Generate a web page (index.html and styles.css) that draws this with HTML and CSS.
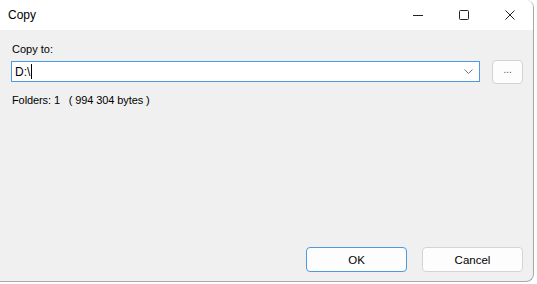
FILE: index.html
```html
<!DOCTYPE html>
<html lang="en">
<head>
  <meta charset="UTF-8" />
  <title>Copy</title>
  <link rel="stylesheet" href="styles.css">
</head>
<body>
  <div class="window">
    <div class="titlebar">
      <span class="title">Copy</span>
      <div class="caption">
        <span class="cap-btn">
          <svg width="10" height="10" viewBox="0 0 10 10"><path d="M0 5.5h10" stroke="#222" stroke-width="1"/></svg>
        </span>
        <span class="cap-btn">
          <svg width="10" height="10" viewBox="0 0 10 10"><rect x="0.5" y="0.5" width="9" height="9" rx="1" fill="none" stroke="#222" stroke-width="1"/></svg>
        </span>
        <span class="cap-btn">
          <svg width="10" height="10" viewBox="0 0 10 10"><path d="M0.5 0.5l9 9M9.5 0.5l-9 9" stroke="#222" stroke-width="1"/></svg>
        </span>
      </div>
    </div>

    <div class="content">
      <div class="label">Copy to:</div>
      <div class="path-row">
        <div class="combo">
          <span class="value">D:\<span class="caret"></span></span>
          <svg class="chevron" width="9" height="5" viewBox="0 0 9 5"><path d="M0.5 0.5l4 4 4-4" fill="none" stroke="#777" stroke-width="1"/></svg>
        </div>
        <button class="browse">...</button>
      </div>
      <div class="info">Folders: 1&nbsp;&nbsp; ( 994 304 bytes )</div>

      <div class="footer">
        <button class="btn default">OK</button>
        <button class="btn">Cancel</button>
      </div>
    </div>
  </div>
</body>
</html>
```

FILE: styles.css
```css
body {
  margin: 0;
  background-color: #fff;
  font-family: "Liberation Sans", Arial, sans-serif;
  font-size: 11px;
  color: #000;
}

.window {
  width: 533px;
  height: 281px;
  display: flex;
  flex-direction: column;
  background-color: #f0f0f0;
  border-right: 1px solid #a8a8a8;
  border-bottom: 1px solid #a8a8a8;
  border-radius: 0 8px 8px 0;
  overflow: hidden;
}

.titlebar {
  height: 30px;
  display: flex;
  align-items: center;
  justify-content: space-between;
  background-color: #fff;
}

.title {
  padding-left: 8px;
  font-size: 12px;
}

.caption {
  display: flex;
  height: 30px;
}

.cap-btn {
  width: 46px;
  display: flex;
  align-items: center;
  justify-content: center;
}

.content {
  flex: 1;
  display: flex;
  flex-direction: column;
  padding: 12px 10px 9px 12px;
}

.label {
  line-height: 15px;
}

.path-row {
  margin-top: 3px;
  margin-left: -1px;
  height: 23px;
  display: flex;
  align-items: center;
  gap: 14px;
}

.combo {
  width: 466px;
  height: 19px;
  display: flex;
  align-items: center;
  justify-content: space-between;
  background-color: #fff;
  border: 1px solid #4b9ae2;
  padding: 0 5px 0 3px;
  box-sizing: content-box;
  margin-right: -2px;
  font-size: 12px;
}

.value {
  display: flex;
  align-items: center;
}

.caret {
  width: 1px;
  height: 15px;
  margin-left: 1px;
  background-color: #000;
}

.chevron {
  margin-right: 1px;
}

.browse {
  width: 31px;
  height: 24px;
  padding: 0 0 4px;
  font-family: inherit;
  font-size: 10px;
  color: #555;
  background-color: #fdfdfd;
  border: 1px solid #d2d2d2;
  border-radius: 4px;
}

.info {
  margin-top: 10px;
  line-height: 15px;
  letter-spacing: -0.1px;
}

.footer {
  margin-top: auto;
  display: flex;
  justify-content: flex-end;
  gap: 15px;
}

.btn {
  width: 101px;
  height: 25px;
  font-family: inherit;
  font-size: 11.5px;
  color: #000;
  background-color: #fdfdfd;
  border: 1px solid #d4d4d4;
  border-radius: 4px;
}

.btn.default {
  border-color: #4b9ae2;
}
```
